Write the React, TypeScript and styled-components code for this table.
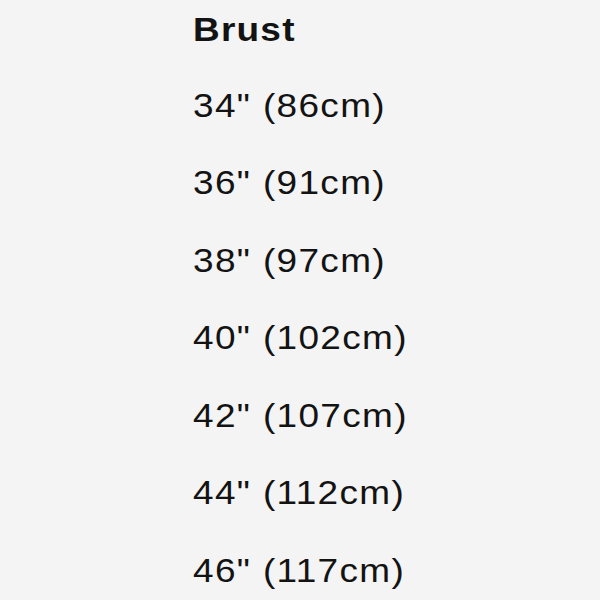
import React from 'react';
import styled, { createGlobalStyle } from 'styled-components';

const sizes = [
  { inches: 34, cm: 86 },
  { inches: 36, cm: 91 },
  { inches: 38, cm: 97 },
  { inches: 40, cm: 102 },
  { inches: 42, cm: 107 },
  { inches: 44, cm: 112 },
  { inches: 46, cm: 117 },
];

const App = () => {
  return (
    <>
      <GlobalStyle />
      <SizeColumn>
        <Heading>Brust</Heading>
        <SizeList>
          {sizes.map((size) => (
            <SizeRow key={size.inches}>
              {size.inches}" ({size.cm}cm)
            </SizeRow>
          ))}
        </SizeList>
      </SizeColumn>
    </>
  );
};

const GlobalStyle = createGlobalStyle`
  html, body {
    margin: 0;
    padding: 0;
    background: #f4f4f4;
  }
`;

const SizeColumn = styled.div`
  display: flex;
  flex-direction: column;

  width: 600px;
  height: 600px;
  padding: 5px 0 0 193px;
  box-sizing: border-box;
  overflow: hidden;

  font-family: 'Liberation Sans', Arial, sans-serif;
  color: #131313;
`;

// the source table is rendered slightly wide, so the text is stretched a bit
const Heading = styled.h2`
  margin: 0;
  font-size: 33px;
  font-weight: 700;
  line-height: 50px;
  letter-spacing: 1.1px;
  transform: scaleX(1.12);
  transform-origin: left center;
`;

const SizeList = styled.ul`
  list-style: none;
  margin: 11.5px 0 0;
  padding: 0;
`;

const SizeRow = styled.li`
  font-size: 33px;
  font-weight: 400;
  line-height: 77.5px;
  letter-spacing: 1.2px;
  white-space: nowrap;
  transform: scaleX(1.12);
  transform-origin: left center;
`;

export default App;
